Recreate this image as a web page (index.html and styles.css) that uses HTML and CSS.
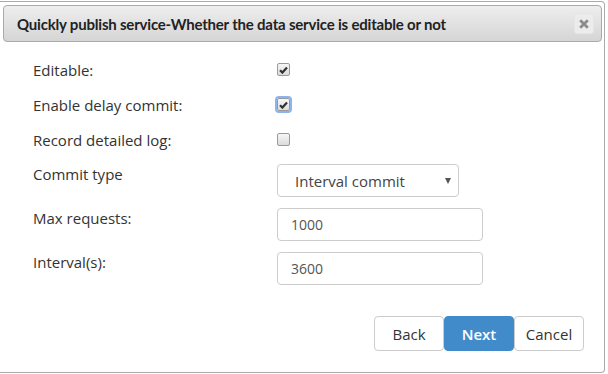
FILE: index.html
```html
<!DOCTYPE html>
<html lang="en">
<head>
    <meta charset="UTF-8">
    <title>Quickly publish service</title>
    <link rel="stylesheet" href="styles.css">
</head>
<body>
    <div class="dialog">
        <div class="dialog-header">
            <span class="dialog-title">Quickly publish service-Whether the data service is editable or not</span>
            <button class="close-btn" title="Close">
                <svg width="10" height="10" viewBox="0 0 10 10"><path d="M1.2 1.2 L8.8 8.8 M8.8 1.2 L1.2 8.8" stroke="#8c8c8c" stroke-width="2.8"/></svg>
            </button>
        </div>

        <div class="dialog-body">
            <div class="check-row">
                <label class="field-label">Editable:</label>
                <span class="checkbox checked">
                    <svg width="9" height="8" viewBox="0 0 9 8"><path d="M1 4.2 L3.4 6.6 L8 1.4" fill="none" stroke="#333" stroke-width="2.2"/></svg>
                </span>
            </div>
            <div class="check-row">
                <label class="field-label">Enable delay commit:</label>
                <span class="checkbox checked focused">
                    <svg width="9" height="8" viewBox="0 0 9 8"><path d="M1 4.2 L3.4 6.6 L8 1.4" fill="none" stroke="#333" stroke-width="2.2"/></svg>
                </span>
            </div>
            <div class="check-row">
                <label class="field-label">Record detailed log:</label>
                <span class="checkbox"></span>
            </div>

            <div class="field-row first">
                <label class="field-label">Commit type</label>
                <div class="select">
                    <span>Interval commit</span>
                    <span class="select-arrow"></span>
                </div>
            </div>
            <div class="field-row">
                <label class="field-label">Max requests:</label>
                <input class="text-input" type="text" value="1000">
            </div>
            <div class="field-row">
                <label class="field-label">Interval(s):</label>
                <input class="text-input" type="text" value="3600">
            </div>
        </div>

        <div class="dialog-footer">
            <button class="btn">Back</button>
            <button class="btn btn-primary">Next</button>
            <button class="btn">Cancel</button>
        </div>
    </div>
</body>
</html>
```

FILE: styles.css
```css
body {
    margin: 0;
    background: #fff;
    font-family: 'Open Sans', 'Noto Sans', sans-serif;
    color: #333;
}

.dialog {
    margin-top: 1px;
    width: 605px;
    height: 372px;
    box-sizing: border-box;
    border: 1px solid #aaa;
    border-left: 0;
    border-radius: 0 4px 4px 0;
    padding: 3px 2px 0 3px;
    display: flex;
    flex-direction: column;
}

.dialog-header {
    height: 37px;
    box-sizing: border-box;
    border: 1px solid #aaa;
    border-radius: 4px;
    background: linear-gradient(#eeeeee, #d5d5d5);
    display: flex;
    align-items: center;
    justify-content: space-between;
    padding: 0 7px 0 13px;
}

.dialog-title {
    font-family: 'Lato', 'Open Sans', sans-serif;
    font-weight: 700;
    font-size: 15px;
    letter-spacing: -0.2px;
    color: #222;
}

.close-btn {
    width: 20px;
    height: 21px;
    border: 1px solid #e6e6e6;
    border-radius: 3px;
    background: #ececec;
    padding: 0;
    display: flex;
    align-items: center;
    justify-content: center;
    cursor: pointer;
}

.dialog-body {
    padding: 10px 0 0 30px;
}

.field-label {
    width: 244px;
    flex-shrink: 0;
    font-size: 15px;
    line-height: 20px;
}

.check-row {
    height: 35px;
    display: flex;
    align-items: center;
}

.checkbox {
    width: 11px;
    height: 11px;
    border: 1px solid #9a9a9a;
    border-radius: 2px;
    background: linear-gradient(#f6f6f6, #dcdcdc);
    display: flex;
    align-items: center;
    justify-content: center;
}

.checkbox.focused {
    box-shadow: 0 0 0 2px #8ab4f0;
}

.field-row {
    display: flex;
    align-items: flex-start;
    margin-top: 11px;
}

.field-row.first {
    margin-top: 7px;
}

.select {
    width: 182px;
    height: 33px;
    box-sizing: border-box;
    border: 1px solid #ccc;
    border-radius: 4px;
    display: flex;
    align-items: center;
    justify-content: space-between;
    padding: 0 7px 0 17px;
    font-size: 15px;
    color: #444;
}

.select-arrow {
    width: 0;
    height: 0;
    border-left: 3px solid transparent;
    border-right: 3px solid transparent;
    border-top: 6px solid #555;
}

.text-input {
    width: 206px;
    height: 33px;
    box-sizing: border-box;
    border: 1px solid #ccc;
    border-radius: 4px;
    padding: 0 13px;
    font-family: 'Open Sans', 'Noto Sans', sans-serif;
    font-size: 14px;
    color: #555;
    margin: 0;
}

.dialog-footer {
    margin-top: auto;
    padding: 0 18px 21px 0;
    display: flex;
    justify-content: flex-end;
}

.btn {
    height: 35px;
    width: 70px;
    border: 1px solid #ccc;
    border-radius: 4px;
    background: #fff;
    color: #333;
    font-family: 'Open Sans', 'Noto Sans', sans-serif;
    font-size: 15px;
    padding: 0;
    cursor: pointer;
}

.btn-primary {
    background: #428bca;
    border-color: #428bca;
    color: #fff;
    font-weight: 600;
}
```
